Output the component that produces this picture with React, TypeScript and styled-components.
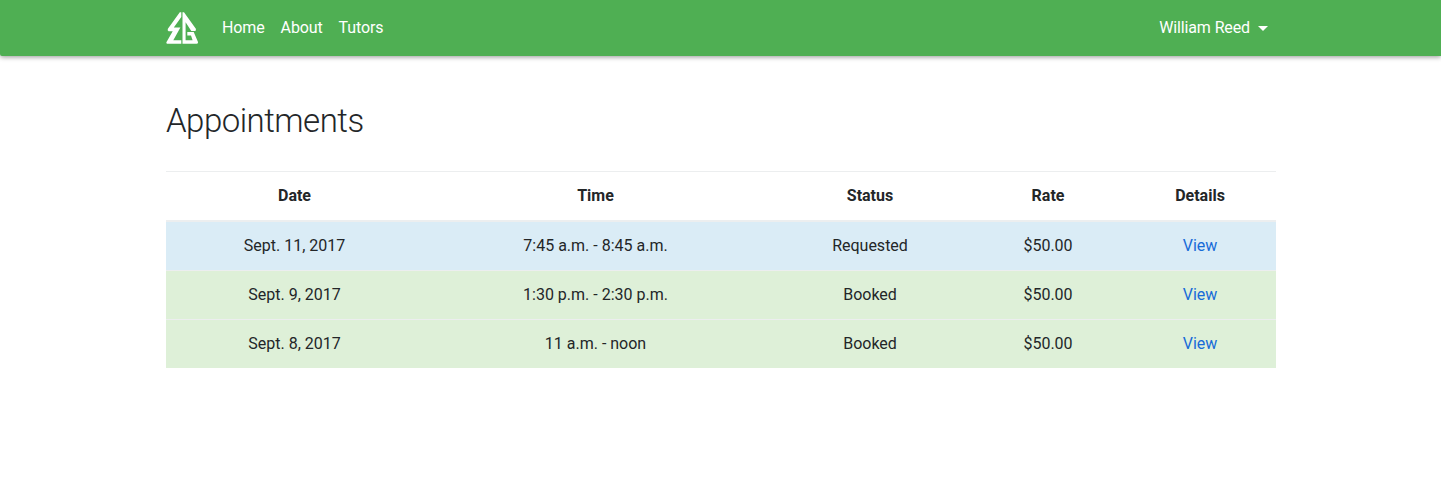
import React from 'react';
import styled, { createGlobalStyle } from 'styled-components';

const GlobalStyle = createGlobalStyle`
  * { box-sizing: border-box; }
  body { margin: 0; background: #fff; color: #232628; font: 400 16px/24px Roboto, sans-serif; }
`;
const Navbar = styled.nav`
  height: 56px;
  background: #4faf53;
  border-radius: 0 0 0 2px;
  box-shadow: 0 1px 5px rgba(0, 0, 0, 0.42);
`;
const Container = styled.div`
  width: 1110px;
  margin: 0 auto 0 166px;
`;
const NavInner = styled(Container)`
  display: flex;
  align-items: center;
  height: 56px;
`;
const Logo = styled.svg`
  display: block;
  width: 32px;
  height: 32px;
  margin-right: 16px;
`;
const NavLink = styled.a`
  color: #fff;
  padding: 8px;
  letter-spacing: -0.12px;
  text-decoration: none;
`;
const UserMenu = styled(NavLink)`
  display: flex;
  align-items: center;
  margin-left: auto;
`;
const Caret = styled.span`
  margin-left: 8px;
  border: 5px solid transparent;
  border-top-color: #fff;
  border-bottom: 0;
`;
const Title = styled.h1`
  margin: 46px 0 31px;
  font-size: 33px;
  line-height: 38px;
  letter-spacing: -0.51px;
  font-weight: 300;
`;
const Table = styled.table`
  width: 100%;
  table-layout: fixed;
  border-collapse: separate;
  border-spacing: 0;
  text-align: center;
`;
const Col = styled.col<{ $w: number }>`
  width: ${(p) => p.$w}px;
`;
const Head = styled.th`
  height: 50px;
  padding: 0;
  border-top: 1px solid #eceeef;
  border-bottom: 1px solid #eceeef;
  font-weight: 700;
`;
const Row = styled.tr<{ $tone: 'info' | 'success' }>`
  background: ${(p) => (p.$tone === 'info' ? '#daecf6' : '#def0d8')};
`;
const Cell = styled.td`
  height: 49px;
  padding: 0;
  border-top: 1px solid #eceeef;
`;
const ViewLink = styled.a`
  color: #176bd8;
  text-decoration: none;
`;

const columns = [
  { name: 'Date', width: 257 },
  { name: 'Time', width: 345 },
  { name: 'Status', width: 204 },
  { name: 'Rate', width: 152 },
  { name: 'Details', width: 152 },
];
const rows = [
  { date: 'Sept. 11, 2017', time: '7:45 a.m. - 8:45 a.m.', status: 'Requested', rate: '$50.00', tone: 'info' as const },
  { date: 'Sept. 9, 2017', time: '1:30 p.m. - 2:30 p.m.', status: 'Booked', rate: '$50.00', tone: 'success' as const },
  { date: 'Sept. 8, 2017', time: '11 a.m. - noon', status: 'Booked', rate: '$50.00', tone: 'success' as const },
];

export default function App() {
  return (
    <>
      <GlobalStyle />
      <Navbar>
        <NavInner>
          <Logo viewBox="0 0 32 32" fill="#fff">
            <path d="M13.8 0.3H15.3V5L7.8 15.5H14.4L7.3 28.2H15.3V31.8H1.2Q0 31.5 0.4 30.2L6.7 19.3H2.6Q1.1 18.5 1.9 16.8Z" />
            <path d="M16.5 0.3H18L30 17.1L29.5 19H25.3L19.6 10.3V28.2H26.6L25 23.6H21.3V20H27.7L32 30Q32.1 31.8 30.6 31.8H16.5Z" />
          </Logo>
          <NavLink>Home</NavLink>
          <NavLink>About</NavLink>
          <NavLink>Tutors</NavLink>
          <UserMenu>William Reed<Caret /></UserMenu>
        </NavInner>
      </Navbar>
      <Container>
        <Title>Appointments</Title>
        <Table>
          <colgroup>{columns.map((c) => <Col key={c.name} $w={c.width} />)}</colgroup>
          <thead><tr>{columns.map((c) => <Head key={c.name}>{c.name}</Head>)}</tr></thead>
          <tbody>
            {rows.map((r) => (
              <Row key={r.date} $tone={r.tone}>
                <Cell>{r.date}</Cell>
                <Cell>{r.time}</Cell>
                <Cell>{r.status}</Cell>
                <Cell>{r.rate}</Cell>
                <Cell><ViewLink>View</ViewLink></Cell>
              </Row>
            ))}
          </tbody>
        </Table>
      </Container>
    </>
  );
}
